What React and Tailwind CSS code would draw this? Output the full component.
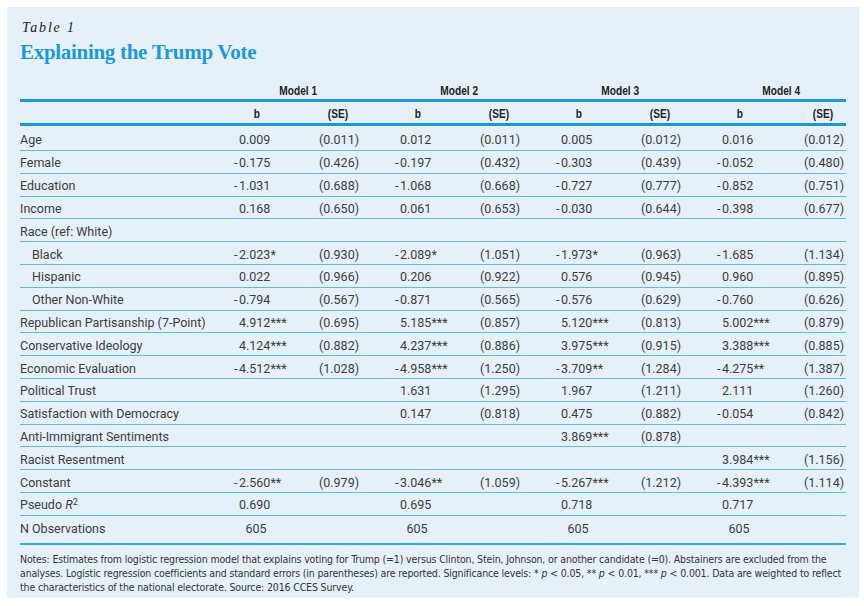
import React from 'react';

const rows = [
  { label: 'Age', first: true, v: ['0.009', '(0.011)', '0.012', '(0.011)', '0.005', '(0.012)', '0.016', '(0.012)'] },
  { label: 'Female', v: ['-0.175', '(0.426)', '-0.197', '(0.432)', '-0.303', '(0.439)', '-0.052', '(0.480)'] },
  { label: 'Education', v: ['-1.031', '(0.688)', '-1.068', '(0.668)', '-0.727', '(0.777)', '-0.852', '(0.751)'] },
  { label: 'Income', v: ['0.168', '(0.650)', '0.061', '(0.653)', '-0.030', '(0.644)', '-0.398', '(0.677)'] },
  { label: 'Race (ref: White)', v: ['', '', '', '', '', '', '', ''] },
  { label: 'Black', indent: true, v: ['-2.023*', '(0.930)', '-2.089*', '(1.051)', '-1.973*', '(0.963)', '-1.685', '(1.134)'] },
  { label: 'Hispanic', indent: true, v: ['0.022', '(0.966)', '0.206', '(0.922)', '0.576', '(0.945)', '0.960', '(0.895)'] },
  { label: 'Other Non-White', indent: true, v: ['-0.794', '(0.567)', '-0.871', '(0.565)', '-0.576', '(0.629)', '-0.760', '(0.626)'] },
  { label: 'Republican Partisanship (7-Point)', v: ['4.912***', '(0.695)', '5.185***', '(0.857)', '5.120***', '(0.813)', '5.002***', '(0.879)'] },
  { label: 'Conservative Ideology', v: ['4.124***', '(0.882)', '4.237***', '(0.886)', '3.975***', '(0.915)', '3.388***', '(0.885)'] },
  { label: 'Economic Evaluation', v: ['-4.512***', '(1.028)', '-4.958***', '(1.250)', '-3.709**', '(1.284)', '-4.275**', '(1.387)'] },
  { label: 'Political Trust', v: ['', '', '1.631', '(1.295)', '1.967', '(1.211)', '2.111', '(1.260)'] },
  { label: 'Satisfaction with Democracy', v: ['', '', '0.147', '(0.818)', '0.475', '(0.882)', '-0.054', '(0.842)'] },
  { label: 'Anti-Immigrant Sentiments', v: ['', '', '', '', '3.869***', '(0.878)', '', ''] },
  { label: 'Racist Resentment', v: ['', '', '', '', '', '', '3.984***', '(1.156)'] },
  { label: 'Constant', v: ['-2.560**', '(0.979)', '-3.046**', '(1.059)', '-5.267***', '(1.212)', '-4.393***', '(1.114)'] },
  { label: 'pseudo', v: ['0.690', '', '0.695', '', '0.718', '', '0.717', ''] },
  { label: 'N Observations', last: true, centered: true, v: ['605', '', '605', '', '605', '', '605', ''] },
];

const cols = 'grid grid-cols-[214px_81px_80px_81px_80px_81px_80px_83px_46px]';
const head = "font-['Liberation_Sans',sans-serif] font-bold text-[13px] leading-[14px] text-[#222]";

const Value = ({ v, isB, centered }) => {
  if (!v) return <div />;
  if (centered) {
    return (
      <div className="pl-[5px]">
        <span className="inline-block w-[34px] text-center">{v}</span>
      </div>
    );
  }
  if (isB && v.startsWith('-')) {
    return (
      <div className="pl-[5px] whitespace-nowrap">
        <span className="inline-block w-[5px] -ml-[5px]">-</span>
        {v.slice(1)}
      </div>
    );
  }
  return <div className={`${isB ? 'pl-[5px]' : 'pl-[4px]'} whitespace-nowrap`}>{v}</div>;
};

const App = () => {
  return (
    <div className="min-h-screen bg-white p-[7px]">
      <div className="w-[852px] h-[591px] bg-[#e6f0f9] px-[13px] pt-[12px]">
        <div className="font-['Liberation_Serif',serif] italic text-[14px] leading-[18px] tracking-[1.8px] text-[#222] pl-[2px]">
          Table 1
        </div>
        <h1 className="mt-[2px] font-['Liberation_Serif',serif] font-bold text-[21px] leading-[26px] tracking-[-0.3px] text-[#1d99d5]">
          Explaining the Trump Vote
        </h1>

        <div className={`${cols} h-[34px] items-end pb-[1px] ${head}`}>
          <div />
          {[1, 2, 3, 4].map(m => (
            <div key={m} className="col-span-2">
              <span className="inline-block w-[128px] text-center">
                <span className="inline-block scale-x-[0.78]">Model {m}</span>
              </span>
            </div>
          ))}
        </div>
        <div className="h-[3px] bg-[#1a97d4]" />
        <div className={`${cols} h-[21px] pt-[5px] ${head}`}>
          <div />
          {[1, 2, 3, 4].map(m => (
            <React.Fragment key={m}>
              <div className="pl-[5px]">
                <span className="inline-block w-[36px] text-center">
                  <span className="inline-block scale-x-[0.78]">b</span>
                </span>
              </div>
              <div className="pl-[4px]">
                <span className="inline-block w-[38px] text-center">
                  <span className="inline-block scale-x-[0.78]">(SE)</span>
                </span>
              </div>
            </React.Fragment>
          ))}
        </div>
        <div className="h-[3px] bg-[#1a97d4]" />

        <div className="font-['Roboto',sans-serif] text-[12.5px] leading-[14px] text-[#3c3c3c]">
          {rows.map(r => (
            <div
              key={r.label}
              className={`${cols} items-center ${r.first ? 'h-[25px] pt-[3px]' : r.last ? 'h-[27px] pb-[1px]' : 'h-[22.8px] pt-[3px]'} ${r.last ? '' : 'border-b border-[#62b8e6]'}`}
            >
              <div className={`whitespace-nowrap ${r.indent ? 'pl-[12px]' : ''}`}>
                {r.label === 'pseudo' ? (
                  <>Pseudo <i>R</i><sup className="text-[9px]">2</sup></>
                ) : r.label}
              </div>
              {r.v.map((v, i) => (
                <Value key={i} v={v} isB={i % 2 === 0} centered={r.centered} />
              ))}
            </div>
          ))}
        </div>
        <div className="h-[2px] bg-[#3aa8e0]" />

        <div className="pt-[7px] font-['DejaVu_Sans_Condensed',sans-serif] text-[10.5px] leading-[14px] tracking-[-0.15px] text-[#333]">
          <span className="block whitespace-nowrap">
            Notes: Estimates from logistic regression model that explains voting for Trump (=1) versus Clinton, Stein, Johnson, or another candidate (=0). Abstainers are excluded from the
          </span>
          <span className="block whitespace-nowrap">
            analyses. Logistic regression coefficients and standard errors (in parentheses) are reported. Significance levels: * <i>p</i> &lt; 0.05, ** <i>p</i> &lt; 0.01, *** <i>p</i> &lt; 0.001. Data are weighted to reflect
          </span>
          <span className="block whitespace-nowrap">
            the characteristics of the national electorate. Source: 2016 CCES Survey.
          </span>
        </div>
      </div>
    </div>
  );
};

export default App;
